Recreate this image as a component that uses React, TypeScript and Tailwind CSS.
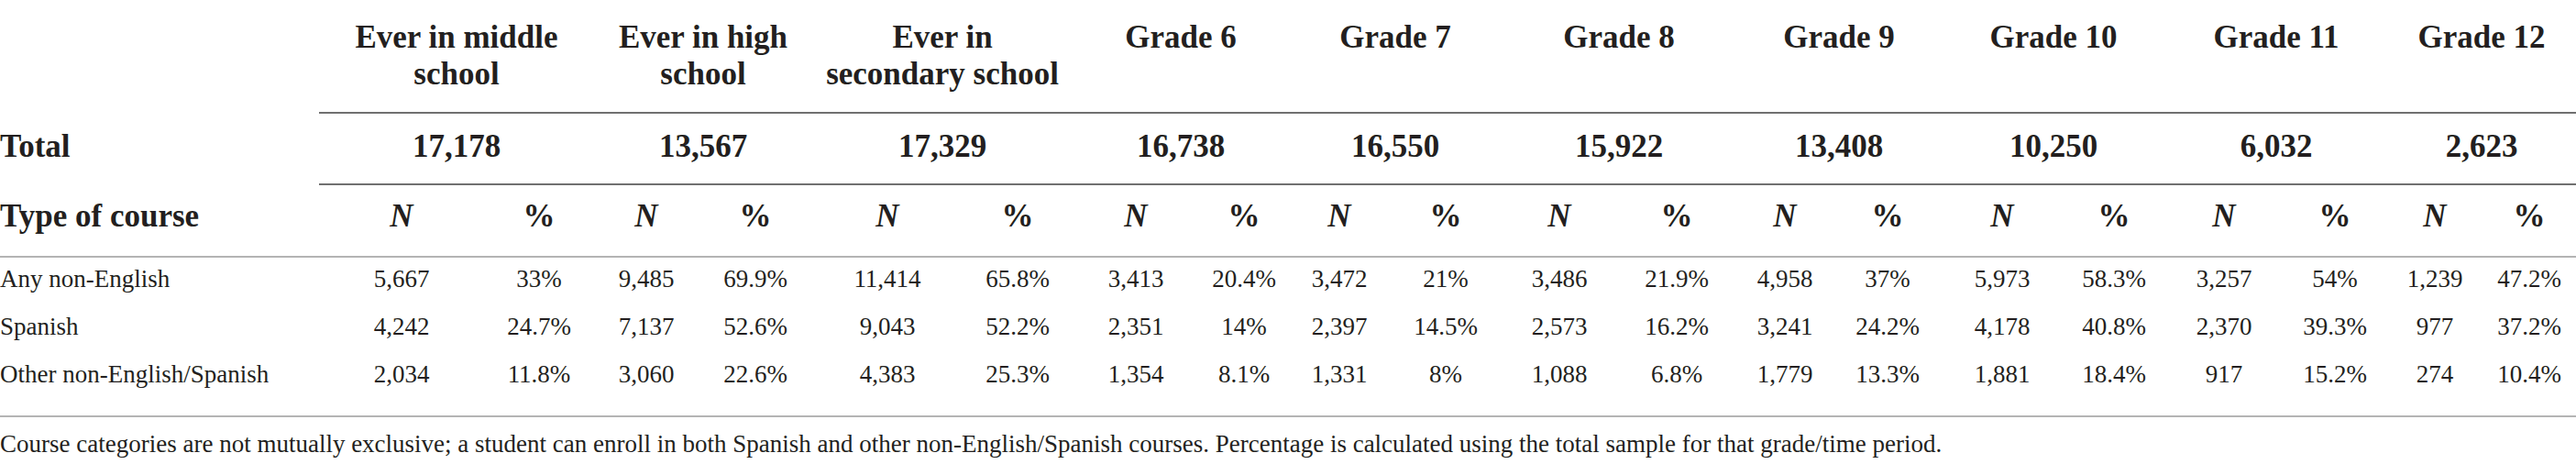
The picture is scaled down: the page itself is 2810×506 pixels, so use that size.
import type { ReactNode } from "react";

type Group = {
    head: ReactNode;
    total: string;
    rows: [string, string][];
};

const groups: Group[] = [
    { head: <>Ever in middle<br />school</>, total: "17,178", rows: [["5,667", "33%"], ["4,242", "24.7%"], ["2,034", "11.8%"]] },
    { head: <>Ever in high<br />school</>, total: "13,567", rows: [["9,485", "69.9%"], ["7,137", "52.6%"], ["3,060", "22.6%"]] },
    { head: <>Ever in<br />secondary school</>, total: "17,329", rows: [["11,414", "65.8%"], ["9,043", "52.2%"], ["4,383", "25.3%"]] },
    { head: "Grade 6", total: "16,738", rows: [["3,413", "20.4%"], ["2,351", "14%"], ["1,354", "8.1%"]] },
    { head: "Grade 7", total: "16,550", rows: [["3,472", "21%"], ["2,397", "14.5%"], ["1,331", "8%"]] },
    { head: "Grade 8", total: "15,922", rows: [["3,486", "21.9%"], ["2,573", "16.2%"], ["1,088", "6.8%"]] },
    { head: "Grade 9", total: "13,408", rows: [["4,958", "37%"], ["3,241", "24.2%"], ["1,779", "13.3%"]] },
    { head: "Grade 10", total: "10,250", rows: [["5,973", "58.3%"], ["4,178", "40.8%"], ["1,881", "18.4%"]] },
    { head: "Grade 11", total: "6,032", rows: [["3,257", "54%"], ["2,370", "39.3%"], ["917", "15.2%"]] },
    { head: "Grade 12", total: "2,623", rows: [["1,239", "47.2%"], ["977", "37.2%"], ["274", "10.4%"]] },
];

const courses = ["Any non-English", "Spanish", "Other non-English/Spanish"];

const headCell = "col-span-2 h-[124px] border-b-2 border-[#707070] pt-[21px] text-center text-[35px] font-bold leading-[40px]";
const totalCell = "col-span-2 h-[78px] border-b-2 border-[#707070] pt-[16px] text-center text-[35px] font-bold leading-[40px]";
const subCell = "h-[79px] border-b-2 border-[#b4b4b4] pt-[14px] text-center text-[35px] font-bold leading-[40px]";
const dataCell = "h-[52px] text-center text-[27px] leading-[46px]";

export default function App() {
    return (
        <div className="w-[2810px] h-[506px] bg-white text-[#231f20] font-['Liberation_Serif',serif]">
            <div className="grid grid-cols-[348px_180px_120px_114px_124px_164px_120px_138px_98px_110px_122px_126px_130px_106px_118px_132px_112px_128px_114px_104px_102px]">
                {/* column heads */}
                <div className="h-[124px]" />
                {groups.map((g, i) => (
                    <div key={i} className={headCell}>{g.head}</div>
                ))}

                {/* totals */}
                <div className="h-[78px] pt-[16px] text-[35px] font-bold leading-[40px]">Total</div>
                {groups.map((g, i) => (
                    <div key={i} className={totalCell}>{g.total}</div>
                ))}

                {/* N / % */}
                <div className="h-[79px] border-b-2 border-[#b4b4b4] pt-[14px] text-[35px] font-bold leading-[40px]">Type of course</div>
                {groups.map((_, i) => [
                    <div key={`n${i}`} className={subCell}><span className="italic">N</span></div>,
                    <div key={`p${i}`} className={subCell}>%</div>,
                ])}

                {courses.map((c, r) => [
                    <div key={`l${r}`} className="h-[52px] text-[27px] leading-[46px]">{c}</div>,
                    ...groups.map((g, i) => [
                        <div key={`n${r}-${i}`} className={dataCell}>{g.rows[r][0]}</div>,
                        <div key={`p${r}-${i}`} className={dataCell}>{g.rows[r][1]}</div>,
                    ]),
                ])}

                <div className="col-span-full h-[18px] border-b-2 border-[#b4b4b4]" />
            </div>

            <p className="mt-[13px] text-[27px] leading-[32px]">
                Course categories are not mutually exclusive; a student can enroll in both Spanish and other non-English/Spanish courses. Percentage is calculated using the total sample for that grade/time period.
            </p>
        </div>
    );
}
